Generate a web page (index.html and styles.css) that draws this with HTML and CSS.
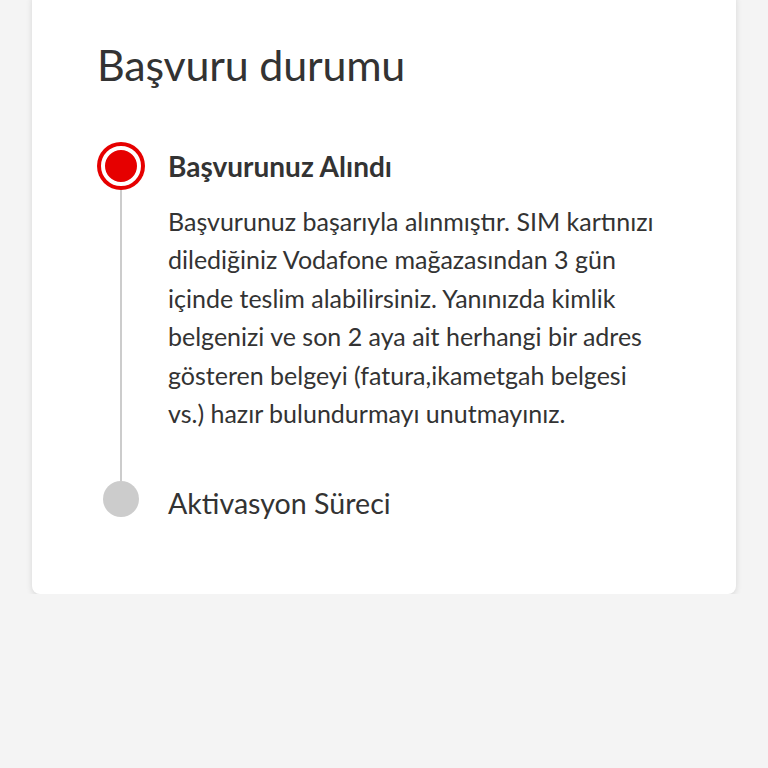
FILE: index.html
```html
<!DOCTYPE html>
<html>
<head>
  <link rel="stylesheet" href="styles.css">
</head>
<body>
  <div class="card">
    <h1 class="title">Başvuru durumu</h1>

    <div class="step done">
      <div class="marker">
        <div class="dot"><span></span></div>
        <div class="line"></div>
      </div>
      <div class="content">
        <div class="step-title">Başvurunuz Alındı</div>
        <p class="step-text">Başvurunuz başarıyla alınmıştır. SIM kartınızı dilediğiniz Vodafone mağazasından 3 gün içinde teslim alabilirsiniz. Yanınızda kimlik belgenizi ve son 2 aya ait herhangi bir adres gösteren belgeyi (fatura,ikametgah belgesi vs.) hazır bulundurmayı unutmayınız.</p>
      </div>
    </div>

    <div class="step pending">
      <div class="marker">
        <div class="dot"></div>
      </div>
      <div class="content">
        <div class="step-title">Aktivasyon Süreci</div>
      </div>
    </div>
  </div>
</body>
</html>
```

FILE: styles.css
```css
body {
  margin: 0;
  background: #f4f4f4;
  font-family: Lato, "Open Sans", sans-serif;
  color: #333;
}
.card {
  margin: -8px 32px 0;
  padding: 48px 65px 73px;
  background: #fff;
  border-radius: 8px;
  box-shadow: 0 2px 6px rgba(0, 0, 0, 0.12);
}
.title {
  margin: 0 0 52px;
  font-size: 43px;
  line-height: 50px;
  font-weight: normal;
  letter-spacing: -0.2px;
}
.step {
  display: flex;
  gap: 23px;
}
.marker {
  width: 48px;
  display: flex;
  flex-direction: column;
  align-items: center;
  flex-shrink: 0;
}
.done .dot {
  width: 48px;
  height: 48px;
  box-sizing: border-box;
  border-radius: 50%;
  background: #e60000;
  padding: 4px;
}
.done .dot span {
  display: block;
  height: 100%;
  box-sizing: border-box;
  border-radius: 50%;
  border: 4px solid #fff;
  background: #e60000;
}
.line {
  flex: 1;
  width: 2px;
  background: #ccc;
}
.pending .dot {
  width: 36px;
  height: 36px;
  border-radius: 50%;
  background: #ccc;
}
.content {
  max-width: 496px;
}
.done .content {
  padding-bottom: 49px;
}
.done .step-title {
  font-size: 28px;
  line-height: 48px;
  font-weight: bold;
}
.step-text {
  margin: 12px 0 0;
  font-size: 25px;
  line-height: 38.4px;
}
.pending .step-title {
  font-size: 28.6px;
  line-height: 36px;
  padding-top: 4px;
}
```
